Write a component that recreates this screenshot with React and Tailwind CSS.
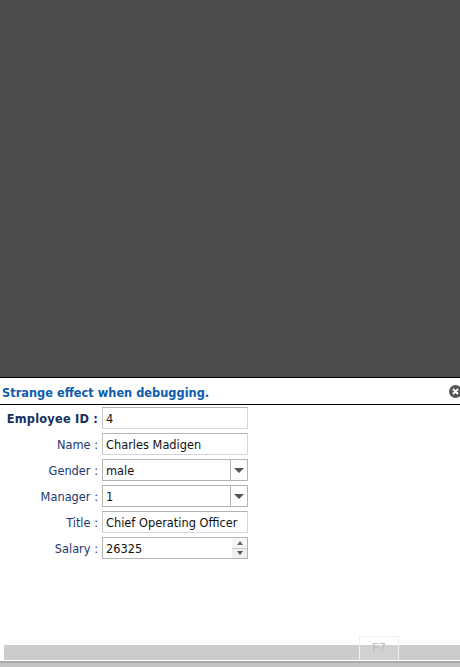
function Row({ label, bold, children }) {
  return (
    <div className="flex items-center h-[22px]">
      <div className={`w-[102px] pr-[4px] pt-[4px] text-right text-[11.4px] whitespace-pre ${bold ? "font-bold text-[#15305f] tracking-[0.2px]" : "text-[#1b3a70]"}`}>{label + " :"}</div>
      {children}
    </div>
  );
}
function Text({ value }) {
  return (
    <div className="w-[146px] h-[22px] border border-[#d4d4dc] border-t-[#b4b4b8] border-l-[#c4c4c8] pl-[3px] pt-[3px] flex items-center text-[11.4px] text-[#111] bg-white">{value}</div>
  );
}
function Select({ value }) {
  return (
    <div className="w-[146px] h-[22px] border border-[#b4b4b4] flex items-center text-[11.4px] text-[#111] bg-white">
      <div className="flex-1 pl-[3px] pt-[3px]">{value}</div>
      <div className="w-[17px] h-full border-l border-[#b4b4b4] flex items-center justify-center">
        <svg width="10" height="5" viewBox="0 0 10 5"><path d="M0 0h10L5 5z" fill="#555" /></svg>
      </div>
    </div>
  );
}
function Spinner({ value }) {
  return (
    <div className="w-[146px] h-[22px] border border-[#b4b4b4] flex items-center text-[11.4px] text-[#111] bg-white">
      <div className="flex-1 pl-[3px] pt-[3px]">{value}</div>
      <div className="w-[15px] h-full flex flex-col">
        <div className="flex-1 flex items-center justify-center border-b border-[#c8c8c8] bg-[#f6f6f6]">
          <svg width="6" height="4" viewBox="0 0 6 4"><path d="M3 0L6 4H0z" fill="#666" /></svg>
        </div>
        <div className="flex-1 flex items-center justify-center bg-[#f0f0f0]">
          <svg width="6" height="4" viewBox="0 0 6 4"><path d="M0 0h6L3 4z" fill="#555" /></svg>
        </div>
      </div>
    </div>
  );
}
export default function App() {
  return (
    <div className="w-[460px] h-[667px] flex flex-col bg-white overflow-hidden relative font-['DejaVu_Sans',sans-serif]">
      <div className="h-[377px] bg-[#4d4d4d]" />
      <div className="h-[28px] border-y border-black flex items-center justify-between pl-[2px] pr-0">
        <div className="pt-[5px] text-[11.4px] font-bold text-[#0f5cad]">Strange effect when debugging.</div>
        <svg width="13" height="13" viewBox="0 0 13 13" className="mr-[-2px]">
          <circle cx="6.5" cy="6.5" r="6.5" fill="#555" />
          <path d="M4 4l5 5M9 4l-5 5" stroke="#fff" strokeWidth="2" />
        </svg>
      </div>
      <div className="flex-1 flex flex-col gap-[4px] pt-[2px]">
        <Row label="Employee ID" bold><Text value="4" /></Row>
        <Row label="Name"><Text value="Charles Madigen" /></Row>
        <Row label="Gender"><Select value="male" /></Row>
        <Row label="Manager"><Select value="1" /></Row>
        <Row label="Title"><Text value="Chief Operating Officer" /></Row>
        <Row label="Salary"><Spinner value="26325" /></Row>
      </div>
      <div className="h-[22px] flex flex-col">
        <div className="h-[15px] ml-[4px] bg-[#cccccc]" />
        <div className="h-[1px] bg-white" />
        <div className="h-[2px] bg-[#aaaaaa]" />
        <div className="flex-1 bg-[#c4c4c4]" />
      </div>
      <div className="absolute left-[359px] top-[636px] w-[40px] h-[24px] border border-[#f0f0f0] border-b-0 flex items-center justify-center text-[11.4px] text-[#bbbbbb] bg-white/10">F7</div>
    </div>
  );
}
